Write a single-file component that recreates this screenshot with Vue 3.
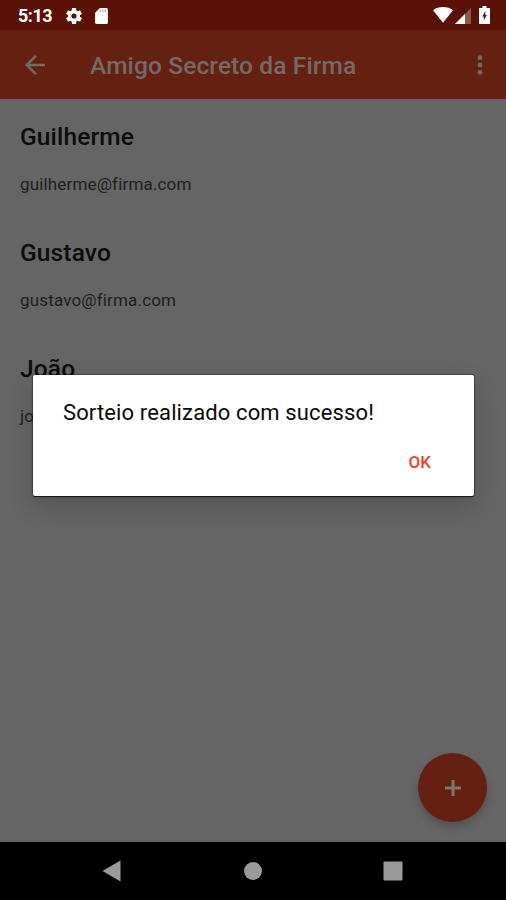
<script setup>
import { ref } from 'vue';

const title = 'Amigo Secreto da Firma';

const participants = ref([
    { name: 'Guilherme', email: 'guilherme@firma.com' },
    { name: 'Gustavo', email: 'gustavo@firma.com' },
    { name: 'João', email: 'joao@firma.com' }
]);

const showDialog = ref(true);
</script>

<template>
    <div class="screen">
        <header class="status-bar">
            <span class="clock">5:13</span>
            <svg class="gear" viewBox="2 2 20 20" width="16" height="16">
                <path fill="#fff" fill-rule="evenodd" d="M19.43 12.98c.04-.32.07-.64.07-.98s-.03-.66-.07-.98l2.11-1.65c.19-.15.24-.42.12-.64l-2-3.46c-.12-.22-.39-.3-.61-.22l-2.49 1c-.52-.4-1.08-.73-1.69-.98l-.38-2.65A.49.49 0 0 0 14 2h-4c-.25 0-.46.18-.49.42l-.38 2.65c-.61.25-1.17.59-1.69.98l-2.49-1c-.23-.09-.49 0-.61.22l-2 3.46c-.13.22-.07.49.12.64l2.11 1.65c-.04.32-.07.65-.07.98s.03.66.07.98l-2.11 1.65c-.19.15-.24.42-.12.64l2 3.46c.12.22.39.3.61.22l2.49-1c.52.4 1.08.73 1.69.98l.38 2.65c.03.24.24.42.49.42h4c.25 0 .46-.18.49-.42l.38-2.65c.61-.25 1.17-.59 1.69-.98l2.49 1c.23.09.49 0 .61-.22l2-3.46c.12-.22.07-.49-.12-.64l-2.11-1.65zM12 15.2a3.2 3.2 0 1 1 0-6.4 3.2 3.2 0 0 1 0 6.4z" />
            </svg>
            <svg class="sd" viewBox="4 2 16 20" width="13" height="16">
                <path fill="#fff" d="M18 2h-8L4 8v12c0 1.100.9 2 2 2h12c1.100 0 2-.9 2-2V4c0-1.100-.9-2-2-2z" />
                <path fill="#5a1208" opacity=".35" d="M9.500 4h1.800v3H9.500zm3.200 0h1.800v3h-1.800zm3.200 0h1.800v3h-1.800z" />
            </svg>
            <span class="spacer"></span>
            <svg class="wifi" viewBox="0 0 20 16" width="20" height="16">
                <path fill="#fff" d="M10 15.800 0 3.200C2.800 1.100 6.200 0 10 0s7.200 1.100 10 3.200z" />
            </svg>
            <svg class="signal" viewBox="0 0 16 16" width="16" height="16">
                <path fill="#fff" opacity=".3" d="M16 0v16H0z" />
                <path fill="#fff" d="M10 6v10H0z" />
            </svg>
            <svg class="battery" viewBox="0 0 11 18" width="11" height="18">
                <path fill="#fff" d="M3.500 0h4v2H10c.6 0 1 .4 1 1v14c0 .6-.4 1-1 1H1c-.6 0-1-.4-1-1V3c0-.6.4-1 1-1h2.500z" />
                <path fill="#5a1208" d="M6.300 5v4H7.800L4.800 14.500v-4H3.300z" />
            </svg>
        </header>

        <div class="toolbar">
            <svg class="back" viewBox="4 4 16 16" width="20" height="20">
                <path d="M20 11H7.830l5.590-5.590L12 4l-8 8 8 8 1.410-1.410L7.830 13H20v-2z" />
            </svg>
            <h1>{{ title }}</h1>
            <svg class="more" viewBox="0 0 6 20" width="6" height="20">
                <circle cx="3" cy="2.700" r="2.400" />
                <circle cx="3" cy="10" r="2.400" />
                <circle cx="3" cy="17.300" r="2.400" />
            </svg>
        </div>

        <main class="content">
            <div v-for="p in participants" :key="p.name" class="participant">
                <h2>{{ p.name }}</h2>
                <p>{{ p.email }}</p>
            </div>
            <button class="fab" aria-label="Adicionar">
                <svg viewBox="0 0 16 16" width="16" height="16">
                    <path d="M6.500 0h3v6.500H16v3H9.500V16h-3V9.500H0v-3h6.500z" />
                </svg>
            </button>
        </main>

        <nav class="nav-bar">
            <svg viewBox="0 0 20 22" width="20" height="22">
                <path d="M18.500.5V21.500L.5 11z" />
            </svg>
            <svg viewBox="0 0 20 20" width="20" height="20">
                <circle cx="10" cy="10" r="9" />
            </svg>
            <svg viewBox="0 0 20 20" width="20" height="20">
                <rect x=".5" y=".5" width="19" height="19" rx="1" />
            </svg>
        </nav>

        <div v-if="showDialog" class="dialog" role="alertdialog">
            <p class="message">Sorteio realizado com sucesso!</p>
            <button class="ok" @click="showDialog = false">OK</button>
        </div>
    </div>
</template>

<style>
body {
    margin: 0;
    background: #000;
}
</style>

<style scoped>
.screen {
    position: relative;
    display: flex;
    flex-direction: column;
    width: 506px;
    height: 900px;
    overflow: hidden;
    background: #656565;
    font-family: Roboto, "Liberation Sans", sans-serif;
}
.status-bar {
    display: flex;
    align-items: center;
    flex: none;
    box-sizing: border-box;
    height: 30px;
    padding: 1px 16px 0 18px;
    background: #5a1208;
}
.clock {
    width: 48px;
    color: #fff;
    font-size: 18px;
    font-weight: 700;
    letter-spacing: -0.5px;
    line-height: 30px;
}
.sd {
    margin-left: 13px;
}
.spacer {
    flex: 1;
}
.wifi {
    margin-top: -2px;
}
.signal {
    margin-left: 2px;
}
.battery {
    margin-left: 8px;
    margin-top: -1px;
}
.toolbar {
    display: flex;
    align-items: center;
    flex: none;
    box-sizing: border-box;
    height: 69px;
    padding: 0 23px 0 25px;
    background: #652011;
    fill: #736a67;
}
.toolbar h1 {
    flex: 1;
    margin: 2px 0 0 45px;
    color: #736a67;
    font-size: 24.5px;
    font-weight: 500;
    letter-spacing: 0.12px;
    line-height: 32px;
    white-space: nowrap;
}
.content {
    position: relative;
    flex: 1;
    padding: 22px 20px 0;
}
.participant {
    height: 116px;
}
.participant h2 {
    margin: 0;
    color: #0c0c0c;
    font-size: 24.5px;
    font-weight: 500;
    letter-spacing: 0.15px;
    line-height: 32px;
}
.participant p {
    margin: 20px 0 0;
    color: #1e1e1e;
    font-size: 17px;
    letter-spacing: 0.16px;
    line-height: 22px;
}
.fab {
    position: absolute;
    right: 19px;
    bottom: 20px;
    display: flex;
    align-items: center;
    justify-content: center;
    width: 69px;
    height: 69px;
    padding: 0;
    border: none;
    border-radius: 50%;
    background: #652011;
    box-shadow: 0 5px 9px rgba(0, 0, 0, 0.2);
}
.fab svg {
    fill: #7d7572;
}
.nav-bar {
    display: flex;
    align-items: center;
    justify-content: space-between;
    flex: none;
    box-sizing: border-box;
    height: 58px;
    padding: 0 103px 0 102px;
    background: #000;
    fill: #9b9b9b;
}
.dialog {
    position: absolute;
    top: 375px;
    left: 33px;
    display: flex;
    flex-direction: column;
    box-sizing: border-box;
    width: 441px;
    height: 121px;
    padding: 22px 30px 0;
    border-radius: 2px;
    background: #fff;
    box-shadow: 0 1px 1px rgba(0, 0, 0, 0.7), 0 0 1px 1px rgba(0, 0, 0, 0.3), 0 10px 24px rgba(0, 0, 0, 0.18);
}
.message {
    margin: 0;
    color: #0a0a0a;
    font-size: 22px;
    letter-spacing: 0.13px;
    line-height: 32px;
    white-space: nowrap;
}
.ok {
    align-self: flex-end;
    margin: 21px 13px 0 0;
    padding: 0;
    border: none;
    background: none;
    color: #f4421f;
    font-family: inherit;
    font-size: 17px;
    font-weight: 500;
    line-height: 24px;
}
</style>
